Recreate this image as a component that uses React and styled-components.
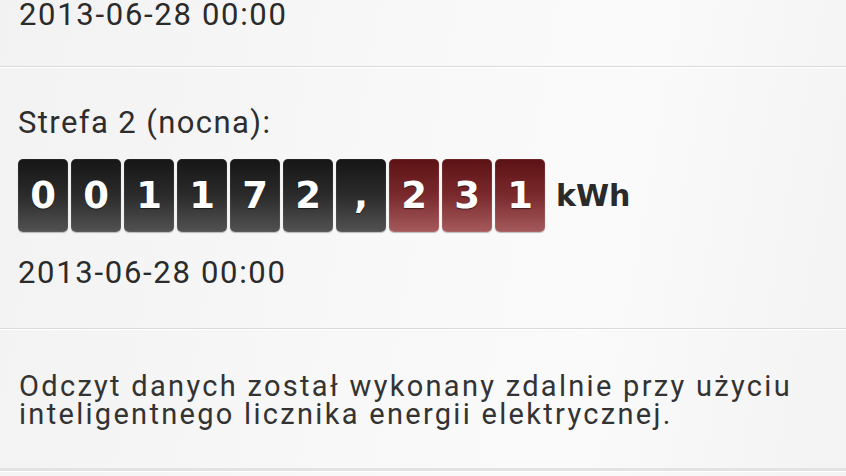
import React from 'react';
import styled, { createGlobalStyle } from 'styled-components';

const GlobalStyle = createGlobalStyle`
    html, body {
        margin: 0;
        padding: 0;
        width: 846px;
        height: 476px;
        overflow: hidden;
        background: #f5f5f5;
    }
`;

const Page = styled.div`
    width: 846px;
    height: 476px;
    overflow: hidden;
    background: linear-gradient(100deg, #f2f2f2 0%, #f8f8f8 45%, #fafafa 70%, #f3f3f3 100%);
    font-family: Roboto, "Liberation Sans", sans-serif;
    color: #2b2b2b;
`;

const Section = styled.section`
    padding: ${p => p.$pad || '0 19px'};
    border-bottom: ${p => p.$thick ? '3px solid #e2e2e2' : '1px solid #dadada'};
    box-shadow: 0 1px 0 #ffffff;
`;

const Label = styled.div`
    font-size: 31px;
    line-height: 28px;
    letter-spacing: 1.4px;
    color: #2e2e2e;
`;

const Stamp = styled.div`
    font-size: 31px;
    line-height: ${p => p.$lh || 28}px;
    letter-spacing: 1.7px;
    color: #2b2b2b;
    margin-top: ${p => p.$top || 0}px;
`;

const Meter = styled.div`
    display: flex;
    align-items: center;
    gap: 3px;
    margin-top: 22px;
`;

const Drum = styled.div`
    width: 50px;
    height: 73px;
    border-radius: 5px;
    display: flex;
    align-items: center;
    justify-content: center;
    box-sizing: border-box;
    font-family: "DejaVu Sans", sans-serif;
    font-weight: bold;
    font-size: 37px;
    color: #ffffff;
    text-shadow: 0 1px 1px rgba(0, 0, 0, 0.5);
    background: ${p => p.$red
        ? 'linear-gradient(180deg, #5c1214 0%, #7a2a2c 50%, #a55a5c 100%)'
        : 'linear-gradient(180deg, #161616 0%, #2b2b2b 50%, #525252 100%)'};
    box-shadow: inset 0 0 0 1px ${p => p.$red ? 'rgba(255,255,255,0.08)' : 'rgba(255,255,255,0.06)'},
        0 1px 1px rgba(0, 0, 0, 0.25);
`;

const Unit = styled.span`
    margin-left: 8px;
    font-family: "DejaVu Sans", sans-serif;
    font-weight: bold;
    font-size: 30px;
    color: #2a2a2a;
`;

const Note = styled.p`
    margin: 0;
    font-size: 29px;
    line-height: 28px;
    letter-spacing: 2.3px;
    color: #333333;
`;

const reading = ['0', '0', '1', '1', '7', '2', ',', '2', '3', '1'];

export default function App() {
    return (
        <Page>
            <GlobalStyle />
            <Section $pad="0 19px 36px">
                <Stamp $lh={30}>2013-06-28 00:00</Stamp>
            </Section>
            <Section $pad="42px 18px 41px">
                <Label>Strefa 2 (nocna):</Label>
                <Meter>
                    {reading.map((d, i) => (
                        <Drum key={i} $red={i > 6}>{d}</Drum>
                    ))}
                    <Unit>kWh</Unit>
                </Meter>
                <Stamp $top={27}>2013-06-28 00:00</Stamp>
            </Section>
            <Section $pad="43px 19px 40px" $thick>
                <Note>
                    Odczyt danych został wykonany zdalnie przy użyciu inteligentnego licznika energii elektrycznej.
                </Note>
            </Section>
        </Page>
    );
}
